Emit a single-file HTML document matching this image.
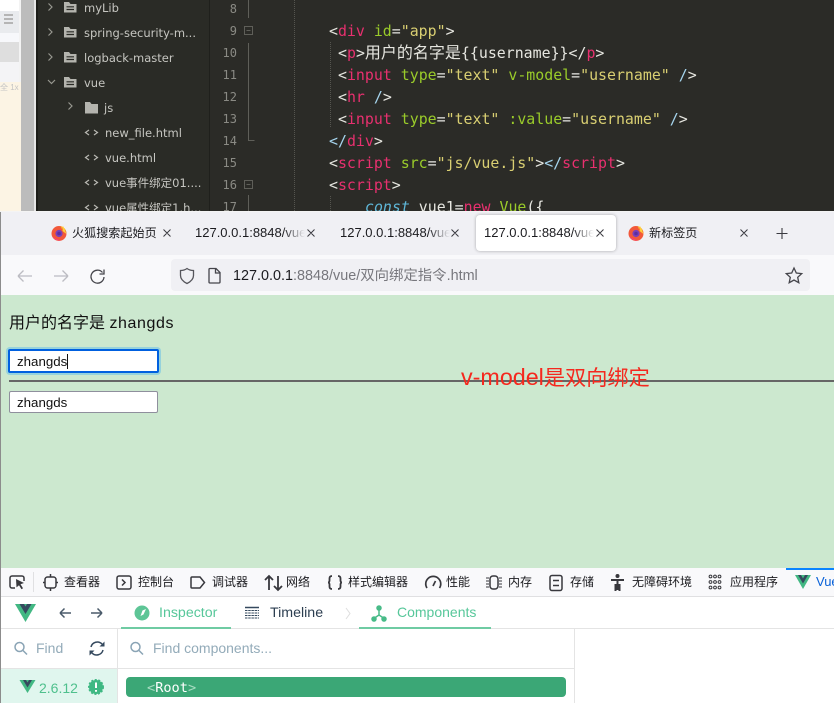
<!DOCTYPE html>
<html><head><meta charset="utf-8">
<style>
html,body{margin:0;padding:0;width:834px;height:703px;overflow:hidden;background:#fff;font-family:"Liberation Sans","Noto Sans CJK SC",sans-serif}
.a{position:absolute;white-space:nowrap}
#root{position:relative;width:834px;height:703px;overflow:hidden}
.tree{color:#c6c6c1;font-family:"DejaVu Sans","Noto Sans CJK SC",sans-serif;font-size:11.500px;line-height:16px}
.ln{font-family:"DejaVu Sans Mono","Noto Sans CJK SC",monospace;font-size:12px;color:#8a8a84;line-height:16px;text-align:right;width:30px;left:207px}
.code{font-family:"DejaVu Sans Mono","Noto Sans CJK SC",monospace;font-size:14.900px;line-height:22px;color:#e6e6e0;left:329px}
.code i.z{font-style:normal;font-size:16px}
.t{color:#e8306f}.g{color:#9acb2a}.s{color:#d9cf72}.c{color:#5fb7d8;font-style:italic}.b{color:#a6d5ee}
.tab{font-size:13px;color:#1b1b1f;line-height:18px}
.dt{font-size:12px;color:#1b1b1f;line-height:18px}
svg{position:absolute;overflow:visible}
</style></head><body><div id="root">

<!-- left sliver -->
<div class="a" style="left:0;top:0;width:21px;height:11px;background:#fff"></div>
<div class="a" style="left:0;top:11px;width:19px;height:22px;background:#e9ebee"></div>
<div class="a" style="left:19px;top:0;width:2px;height:211px;background:#f3f3f3"></div>
<div class="a" style="left:0;top:33px;width:19px;height:9px;background:#f7f8fb"></div>
<div class="a" style="left:0;top:42px;width:19px;height:20px;background:#dedede"></div>
<div class="a" style="left:0;top:62px;width:19px;height:20px;background:#f4f4f6"></div>
<div class="a" style="left:0;top:82px;width:21px;height:129px;background:#fcf4e4"></div>
<div class="a" style="left:4px;top:14px;width:9px;height:2px;background:#b5b5b5;box-shadow:0 4px 0 #b5b5b5,0 8px 0 #b5b5b5"></div>
<div class="a" style="left:0;top:83px;font-size:8px;color:#c4c4c4;line-height:10px">全 1x</div>
<div class="a" style="left:21px;top:0;width:13px;height:211px;background:#bcbcbc"></div>
<div class="a" style="left:34px;top:0;width:2px;height:211px;background:#e6e6e6"></div>
<div class="a" style="left:36px;top:0;width:2px;height:211px;background:#1c1d19"></div>

<!-- tree panel -->
<div class="a" style="left:38px;top:0;width:172px;height:211px;background:#2a2b26"></div>
<div class="a" style="left:209px;top:0;width:1px;height:211px;background:#1f201c"></div>
<!-- editor -->
<div class="a" style="left:210px;top:0;width:624px;height:211px;background:#2b2b27"></div>

<svg style="left:0;top:0" width="300" height="211" fill="none" stroke="#97978f" stroke-width="1.200">
 <path d="M48.500 3.500l3.500 3.500-3.500 3.500M48.500 28.500l3.500 3.500-3.500 3.500M48.500 53.500l3.500 3.500-3.500 3.500M68.500 102.500l3.500 3.500-3.500 3.500"/>
 <path d="M48 80l3.500 3.500L55 80"/>
 <g fill="#b4b4ae" stroke="none">
  <path d="M64 2h5l1.500 2H76.500V12.500H64zM64 27h5l1.500 2H76.500V37.500H64zM64 52h5l1.500 2H76.500V62.500H64zM64 77h5l1.500 2H76.500V87.500H64zM85 102h5l1.500 2H98v9.500H85z"/>
 </g>
 <path stroke="#2a2b26" d="M66.500 6.800h7.500M66.500 9.500h7.500M66.500 31.800h7.500M66.500 34.500h7.500M66.500 56.800h7.500M66.500 59.500h7.500M66.500 81.800h7.500M66.500 84.500h7.500"/>
 <path stroke="#b8b8b2" d="M89 130l-3.500 2.500 3.500 2.500M94 130l3.500 2.500-3.500 2.500M89 155l-3.500 2.500 3.500 2.500M94 155l3.500 2.500-3.500 2.500M89 180l-3.500 2.500 3.500 2.500M94 180l3.500 2.500-3.500 2.500M89 205l-3.500 2.500 3.500 2.500M94 205l3.500 2.500-3.500 2.500"/>
 <g stroke="#5f5f59" stroke-width="1">
  <rect x="244.500" y="26.500" width="8" height="8"/><path d="M246.500 30.500h4"/>
  <rect x="244.500" y="180.500" width="8" height="8"/><path d="M246.500 184.500h4"/>
  <path d="M248.500 0v18M248.500 43v98M248.500 140.500h6M248.500 195v16"/>
 </g>
 <g stroke="#55554f" stroke-width="1" stroke-dasharray="1 1">
  <path d="M294.500 0v211M330.500 42v86M330.500 196v15"/>
 </g>
</svg>

<div class="a tree" style="left:84px;top:0">myLib</div>
<div class="a tree" style="left:84px;top:25px">spring-security-m...</div>
<div class="a tree" style="left:84px;top:50px">logback-master</div>
<div class="a tree" style="left:84px;top:75px">vue</div>
<div class="a tree" style="left:104px;top:100px">js</div>
<div class="a tree" style="left:105px;top:125px">new_file.html</div>
<div class="a tree" style="left:105px;top:150px">vue.html</div>
<div class="a tree" style="left:105px;top:175px">vue事件绑定01....</div>
<div class="a tree" style="left:105px;top:200px">vue属性绑定1.h...</div>

<div class="a ln" style="top:1px">8</div>
<div class="a ln" style="top:23px">9</div>
<div class="a ln" style="top:45px">10</div>
<div class="a ln" style="top:67px">11</div>
<div class="a ln" style="top:89px">12</div>
<div class="a ln" style="top:111px">13</div>
<div class="a ln" style="top:133px">14</div>
<div class="a ln" style="top:155px">15</div>
<div class="a ln" style="top:177px">16</div>
<div class="a ln" style="top:199px">17</div>

<div class="a code" style="top:20px">&lt;<span class="t">div</span> <span class="g">id</span>=<span class="s">"app"</span>&gt;</div>
<div class="a code" style="top:42px;left:338px">&lt;<span class="t">p</span>&gt;<i class="z">用户的名字是</i>{{username}}&lt;/<span class="t">p</span>&gt;</div>
<div class="a code" style="top:64px;left:338px">&lt;<span class="t">input</span> <span class="g">type</span>=<span class="s">"text"</span> <span class="g">v-model</span>=<span class="s">"username"</span> <span class="b">/</span>&gt;</div>
<div class="a code" style="top:86px;left:338px">&lt;<span class="t">hr</span> <span class="b">/</span>&gt;</div>
<div class="a code" style="top:108px;left:338px">&lt;<span class="t">input</span> <span class="g">type</span>=<span class="s">"text"</span> <span class="g">:value</span>=<span class="s">"username"</span> <span class="b">/</span>&gt;</div>
<div class="a code" style="top:130px"><span class="b">&lt;/</span><span class="t">div</span>&gt;</div>
<div class="a code" style="top:152px">&lt;<span class="t">script</span> <span class="g">src</span>=<span class="s">"js/vue.js"</span>&gt;<span class="b">&lt;/</span><span class="t">script</span>&gt;</div>
<div class="a code" style="top:174px">&lt;<span class="t">script</span>&gt;</div>
<div class="a code" style="top:196px;left:365px"><span class="c">const</span> vue1=<span class="t">new</span> <span class="g">Vue</span>({</div>

<!-- browser window -->
<div class="a" style="left:0;top:211px;width:834px;height:492px;background:#fff"></div>
<div class="a" style="left:0;top:211px;width:834px;height:1px;background:#f4f4f4"></div>
<!-- tab bar -->
<div class="a" style="left:1px;top:212px;width:833px;height:43px;background:#f0f0f4"></div>
<!-- active tab -->
<div class="a" style="left:476px;top:215px;width:140px;height:36px;background:#fff;border-radius:4px;box-shadow:0 0 3px rgba(0,0,0,.3)"></div>

<!-- firefox icons -->
<svg style="left:51px;top:225px" width="16" height="16" viewBox="0 0 16 16">
 <circle cx="8" cy="8.500" r="7.500" fill="#f2583a"/><path d="M8 1C12 1 15.500 4 15.500 8.500 15.500 5 12 3 10 3.500 11 2.500 10 1 8 1z" fill="#ffbd2e"/><path d="M12 1l1.500 3 2 5-4-3z" fill="#ffcf3a"/><circle cx="8" cy="8.500" r="3.600" fill="#7a3fb8"/><circle cx="8" cy="8.500" r="1.800" fill="#5d2ea0"/><path d="M1 10c1.500 4 5 5.500 8 5.500s-6-1-8-5.500z" fill="#ff3a8c"/>
</svg>
<svg style="left:628px;top:225px" width="16" height="16" viewBox="0 0 16 16">
 <circle cx="8" cy="8.500" r="7.500" fill="#f2583a"/><path d="M8 1C12 1 15.500 4 15.500 8.500 15.500 5 12 3 10 3.500 11 2.500 10 1 8 1z" fill="#ffbd2e"/><path d="M12 1l1.500 3 2 5-4-3z" fill="#ffcf3a"/><circle cx="8" cy="8.500" r="3.600" fill="#7a3fb8"/><circle cx="8" cy="8.500" r="1.800" fill="#5d2ea0"/><path d="M1 10c1.500 4 5 5.500 8 5.500s-6-1-8-5.500z" fill="#ff3a8c"/>
</svg>

<div class="a tab" style="left:72px;top:224px;font-size:12.100px">火狐搜索起始页</div>
<div class="a tab" style="left:195px;top:224px;width:110px;overflow:hidden;-webkit-mask-image:linear-gradient(90deg,#000 80%,transparent);mask-image:linear-gradient(90deg,#000 80%,transparent)">127.0.0.1:8848/vue/双向</div>
<div class="a tab" style="left:340px;top:224px;width:110px;overflow:hidden;-webkit-mask-image:linear-gradient(90deg,#000 80%,transparent);mask-image:linear-gradient(90deg,#000 80%,transparent)">127.0.0.1:8848/vue/双向</div>
<div class="a tab" style="left:484px;top:224px;width:110px;overflow:hidden;-webkit-mask-image:linear-gradient(90deg,#000 80%,transparent);mask-image:linear-gradient(90deg,#000 80%,transparent)">127.0.0.1:8848/vue/双向</div>
<div class="a tab" style="left:649px;top:224px;font-size:12.100px">新标签页</div>

<svg style="left:0;top:212px" width="834" height="40" fill="none" stroke="#3a3a40" stroke-width="1">
 <path d="M163.500 17.500l7 7M170.500 17.500l-7 7M307.500 17.500l7 7M314.500 17.500l-7 7M451.500 17.500l7 7M458.500 17.500l-7 7M596.500 17.500l7 7M603.500 17.500l-7 7M740.500 17.500l7 7M747.500 17.500l-7 7"/>
 <path stroke-width="1.100" d="M782 16v11M776.500 21.500h11"/>
</svg>

<!-- nav bar -->
<div class="a" style="left:1px;top:255px;width:833px;height:40px;background:#f9f9fb"></div>
<div class="a" style="left:171px;top:259px;width:639px;height:32px;background:#f0f0f4;border-radius:4px"></div>
<svg style="left:0;top:255px" width="834" height="40" fill="none" stroke-width="1.300">
 <path stroke="#bcbcc2" d="M18 21h14M18 21l5.500-5.500M18 21l5.500 5.500M54 21h14M68 21l-5.500-5.500M68 21l-5.500 5.500"/>
 <path stroke="#45454b" d="M102.500 17.500A6.500 6.500 0 1 0 104 22M104 14.500v4.500h-4.500"/>
 <path stroke="#55555b" d="M187 13.500c2 1.500 4 2 6.500 2v5c0 4-3.500 6.500-6.500 8-3-1.500-6.500-4-6.500-8v-5c2.500 0 4.500-.5 6.500-2z"/>
 <path stroke="#45454b" d="M210 13.500h6l4 4v9.500a1 1 0 0 1-1 1h-9a1 1 0 0 1-1-1V14.500a1 1 0 0 1 1-1zM215.500 13.500v4.500h4.500"/>
 <path stroke="#45454b" d="M794 13l2.300 5 5.400.6-4 3.700 1.100 5.400-4.800-2.700-4.800 2.700 1.100-5.400-4-3.700 5.400-.6z"/>
</svg>
<div class="a" style="left:233px;top:267px;font-size:14.400px;line-height:18px;color:#1b1b1f">127.0.0.1<span style="color:#77777d">:8848/vue/双向绑定指令.html</span></div>

<!-- page -->
<div class="a" style="left:1px;top:295px;width:833px;height:273px;background:#cce8cf"></div>
<div class="a" style="left:0;top:212px;width:1px;height:491px;background:#8c8c8c"></div>
<div class="a" style="left:9px;top:314px;font-size:16px;line-height:18px;color:#111;top:315px">用户的名字是 <span style="letter-spacing:.6px">zhangds</span></div>
<div class="a" style="left:6px;top:347px;width:155px;height:28px;border-radius:4px;background:#96d2dc"></div>
<div class="a" style="left:8px;top:349px;width:147px;height:20px;border:2px solid #0060df;border-radius:2px;background:#fff;font-size:13.300px;line-height:21px;color:#111"><span style="margin-left:7px">zhangds</span><span style="display:inline-block;width:1px;height:15px;background:#111;vertical-align:-3px"></span></div>
<div class="a" style="left:9px;top:380px;width:825px;height:2px;background:#666"></div>
<div class="a" style="left:9px;top:391px;width:147px;height:20px;border:1px solid #8f8f9d;border-radius:2px;background:#fff;font-size:13.300px;line-height:21px;color:#111"><span style="margin-left:7px">zhangds</span></div>
<div class="a" style="left:461px;top:364px;font-size:21.200px;line-height:26px;color:#f5281e"><span style="font-size:23.300px">v-model</span>是双向绑定</div>

<!-- devtools toolbar -->
<div class="a" style="left:1px;top:568px;width:833px;height:29px;background:#f9f9fb;border-bottom:1px solid #e0e0e2;box-sizing:border-box"></div>
<div class="a" style="left:786px;top:568px;width:48px;height:2px;background:#0a84ff"></div>
<div class="a" style="left:33px;top:572px;width:1px;height:20px;background:#e0e0e2"></div>
<svg style="left:0;top:568px" width="834" height="29" fill="none" stroke="#38383d" stroke-width="1.500">
 <path d="M15 20H12a2 2 0 0 1-2-2V10a2 2 0 0 1 2-2h10a2 2 0 0 1 2 2v3"/><path fill="#38383d" stroke="none" d="M16 11l8 4-3.500 1.300 2.500 4-1.500.9-2.500-4-2.500 2.200z"/>
 <rect x="45" y="9" width="11" height="11" rx="2.500"/><path d="M50.500 6v3M50.500 20v3M43 14.500h2M56 14.500h2"/>
 <rect x="117" y="8" width="14" height="13" rx="2"/><path d="M122 11.500l3 3-3 3"/>
 <path d="M192 9h8l4.500 5.500-4.500 5.500h-8a1 1 0 0 1-1-1V10a1 1 0 0 1 1-1z"/>
 <path stroke-width="1.800" d="M269 22V8M265 12l4-4 4 4M278 8v14M274 18l4 4 4-4"/>
 <path stroke-width="1.800" d="M332 8c-2 0-2.500 1-2.500 2.500v2c0 1-.5 2-1.500 2 1 0 1.500 1 1.500 2v2c0 1.500.5 2.500 2.500 2.500M338 8c2 0 2.500 1 2.500 2.500v2c0 1 .5 2 1.500 2-1 0-1.500 1-1.500 2v2c0 1.500-.5 2.500-2.500 2.500"/>
 <path stroke-width="1.700" d="M427 20a7.500 7.500 0 1 1 12.500 0"/><path stroke-width="1.700" d="M433 18l2.500-5"/>
 <rect x="490" y="8" width="8" height="13" rx="3"/><path stroke-width="1" d="M486 10h3M486 13h3M486 16h3M486 19h3M499 10h3M499 13h3M499 16h3M499 19h3"/>
 <rect x="550" y="7.500" width="12" height="15" rx="2"/><path d="M553 12.500h6M553 17.500h6"/>
 <circle cx="617.500" cy="8" r="2" fill="#38383d" stroke="none"/><path stroke-width="2" d="M611 12h13M617.500 12v10M615.500 16v7M619.500 16v7"/>
 <g stroke-width="1"><circle cx="710.500" cy="8.500" r="1.400"/><circle cx="715" cy="8.500" r="1.400"/><circle cx="719.500" cy="8.500" r="1.400"/><circle cx="710.500" cy="14" r="1.400"/><circle cx="715" cy="14" r="1.400"/><circle cx="719.500" cy="14" r="1.400"/><circle cx="710.500" cy="19.500" r="1.400"/><circle cx="715" cy="19.500" r="1.400"/><circle cx="719.500" cy="19.500" r="1.400"/></g>
 <path stroke="none" fill="#42b883" d="M795 7h16L803 21z"/><path stroke="none" fill="#35495e" d="M798 7h3l2 3.500L805 7h3l-5 8.500z"/>
</svg>
<div class="a dt" style="left:64px;top:573px">查看器</div>
<div class="a dt" style="left:138px;top:573px">控制台</div>
<div class="a dt" style="left:212px;top:573px">调试器</div>
<div class="a dt" style="left:286px;top:573px">网络</div>
<div class="a dt" style="left:348px;top:573px">样式编辑器</div>
<div class="a dt" style="left:446px;top:573px">性能</div>
<div class="a dt" style="left:508px;top:573px">内存</div>
<div class="a dt" style="left:570px;top:573px">存储</div>
<div class="a dt" style="left:632px;top:573px">无障碍环境</div>
<div class="a dt" style="left:730px;top:573px">应用程序</div>
<div class="a dt" style="left:816px;top:573px;color:#0a62d8;font-size:13px">Vue</div>

<!-- vue devtools -->
<div class="a" style="left:1px;top:597px;width:833px;height:106px;background:#fff"></div>
<div class="a" style="left:1px;top:628px;width:833px;height:1px;background:#e4e4e4"></div>
<div class="a" style="left:121px;top:627px;width:110px;height:2px;background:#6fcba3"></div>
<div class="a" style="left:359px;top:627px;width:132px;height:2px;background:#6fcba3"></div>
<div class="a" style="left:117px;top:629px;width:1px;height:74px;background:#e4e4e4"></div>
<div class="a" style="left:574px;top:629px;width:1px;height:74px;background:#e4e4e4"></div>
<div class="a" style="left:1px;top:668px;width:573px;height:1px;background:#e4e4e4"></div>
<div class="a" style="left:1px;top:669px;width:116px;height:34px;background:#e0f6ee"></div>
<div class="a" style="left:126px;top:677px;width:440px;height:20px;background:#3ba776;border-radius:4px"></div>

<svg style="left:0;top:597px" width="580" height="106" fill="none" stroke="#4a5a6a" stroke-width="1.500">
 <path stroke="none" fill="#42b883" d="M15 7h21L25.500 25z"/><path stroke="none" fill="#35495e" d="M19.500 7h4.500l1.500 2.500L27 7h4.500L25.500 17z"/>
 <path d="M60 16h11M60 16l4.500-4.500M60 16l4.500 4.500M91 16h11M102 16l-4.500-4.500M102 16l-4.500 4.500"/>
 <circle cx="142" cy="16" r="7.500" fill="#5dc596" stroke="none"/><path stroke="none" fill="#fff" d="M146 12l-2.500 5.500-3 1.500 2-5.500z"/>
 <g stroke="#35495e" stroke-width="1"><path d="M245 13.500h14M245 16h14M245 18.500h14M245 21h14" stroke-dasharray="2.500 .7"/><path stroke-width="1.500" d="M245 10.500h14"/></g>
 <path stroke="#dedede" stroke-width="1" d="M346 11l4 5.500-4 5.500"/>
 <g stroke="#48bb88"><path d="M379 13v5l-4.500 3M379 18l4.500 3"/><circle cx="379" cy="11" r="2" fill="#48bb88"/><circle cx="374" cy="22" r="2" fill="#48bb88"/><circle cx="384" cy="22" r="2" fill="#48bb88"/></g>
 <g stroke="#8aa4b5"><circle cx="19.500" cy="50" r="4.500"/><path d="M23 53.500l4 4"/><circle cx="135.500" cy="50" r="4.500"/><path d="M139 53.500l4 4"/></g>
 <path stroke="#35495e" d="M91 50a6.500 6.500 0 0 1 11-3M103 53a6.500 6.500 0 0 1-11 3"/><path stroke="none" fill="#35495e" d="M104.500 44.500v5h-5zM89.500 58.500v-5h5z"/>
 <path stroke="none" fill="#42b883" d="M19.500 83h16L27.500 96z"/><path stroke="none" fill="#35495e" d="M23 83h3l1.500 2.500L29 83h3l-4.500 7.500z"/>
 <circle cx="96" cy="90" r="7" fill="#3fb883" stroke="#3fb883" stroke-width="2" stroke-dasharray="2 1.500"/>
 <path stroke="#fff" stroke-width="2" d="M96 85.500v5.500M96 93v1.800"/>
</svg>

<div class="a" style="left:159px;top:604px;font-size:14.200px;line-height:18px;color:#57c79a">Inspector</div>
<div class="a" style="left:270px;top:604px;font-size:14.200px;line-height:18px;color:#2c3e50">Timeline</div>
<div class="a" style="left:397px;top:603px;font-size:14px;line-height:18px;color:#57c79a">Components</div>
<div class="a" style="left:36px;top:639px;font-size:14px;line-height:18px;color:#93abb9">Find</div>
<div class="a" style="left:153px;top:639px;font-size:14px;line-height:18px;color:#93abb9">Find components...</div>
<div class="a" style="left:39px;top:679px;font-size:14px;line-height:18px;color:#4fc08d">2.6.12</div>
<div class="a" style="left:147px;top:680px;font-family:'DejaVu Sans Mono',monospace;font-size:13.600px;line-height:16px;color:#fff"><span style="color:#a8dcc2">&lt;</span>Root<span style="color:#a8dcc2">&gt;</span></div>

</div></body></html>
